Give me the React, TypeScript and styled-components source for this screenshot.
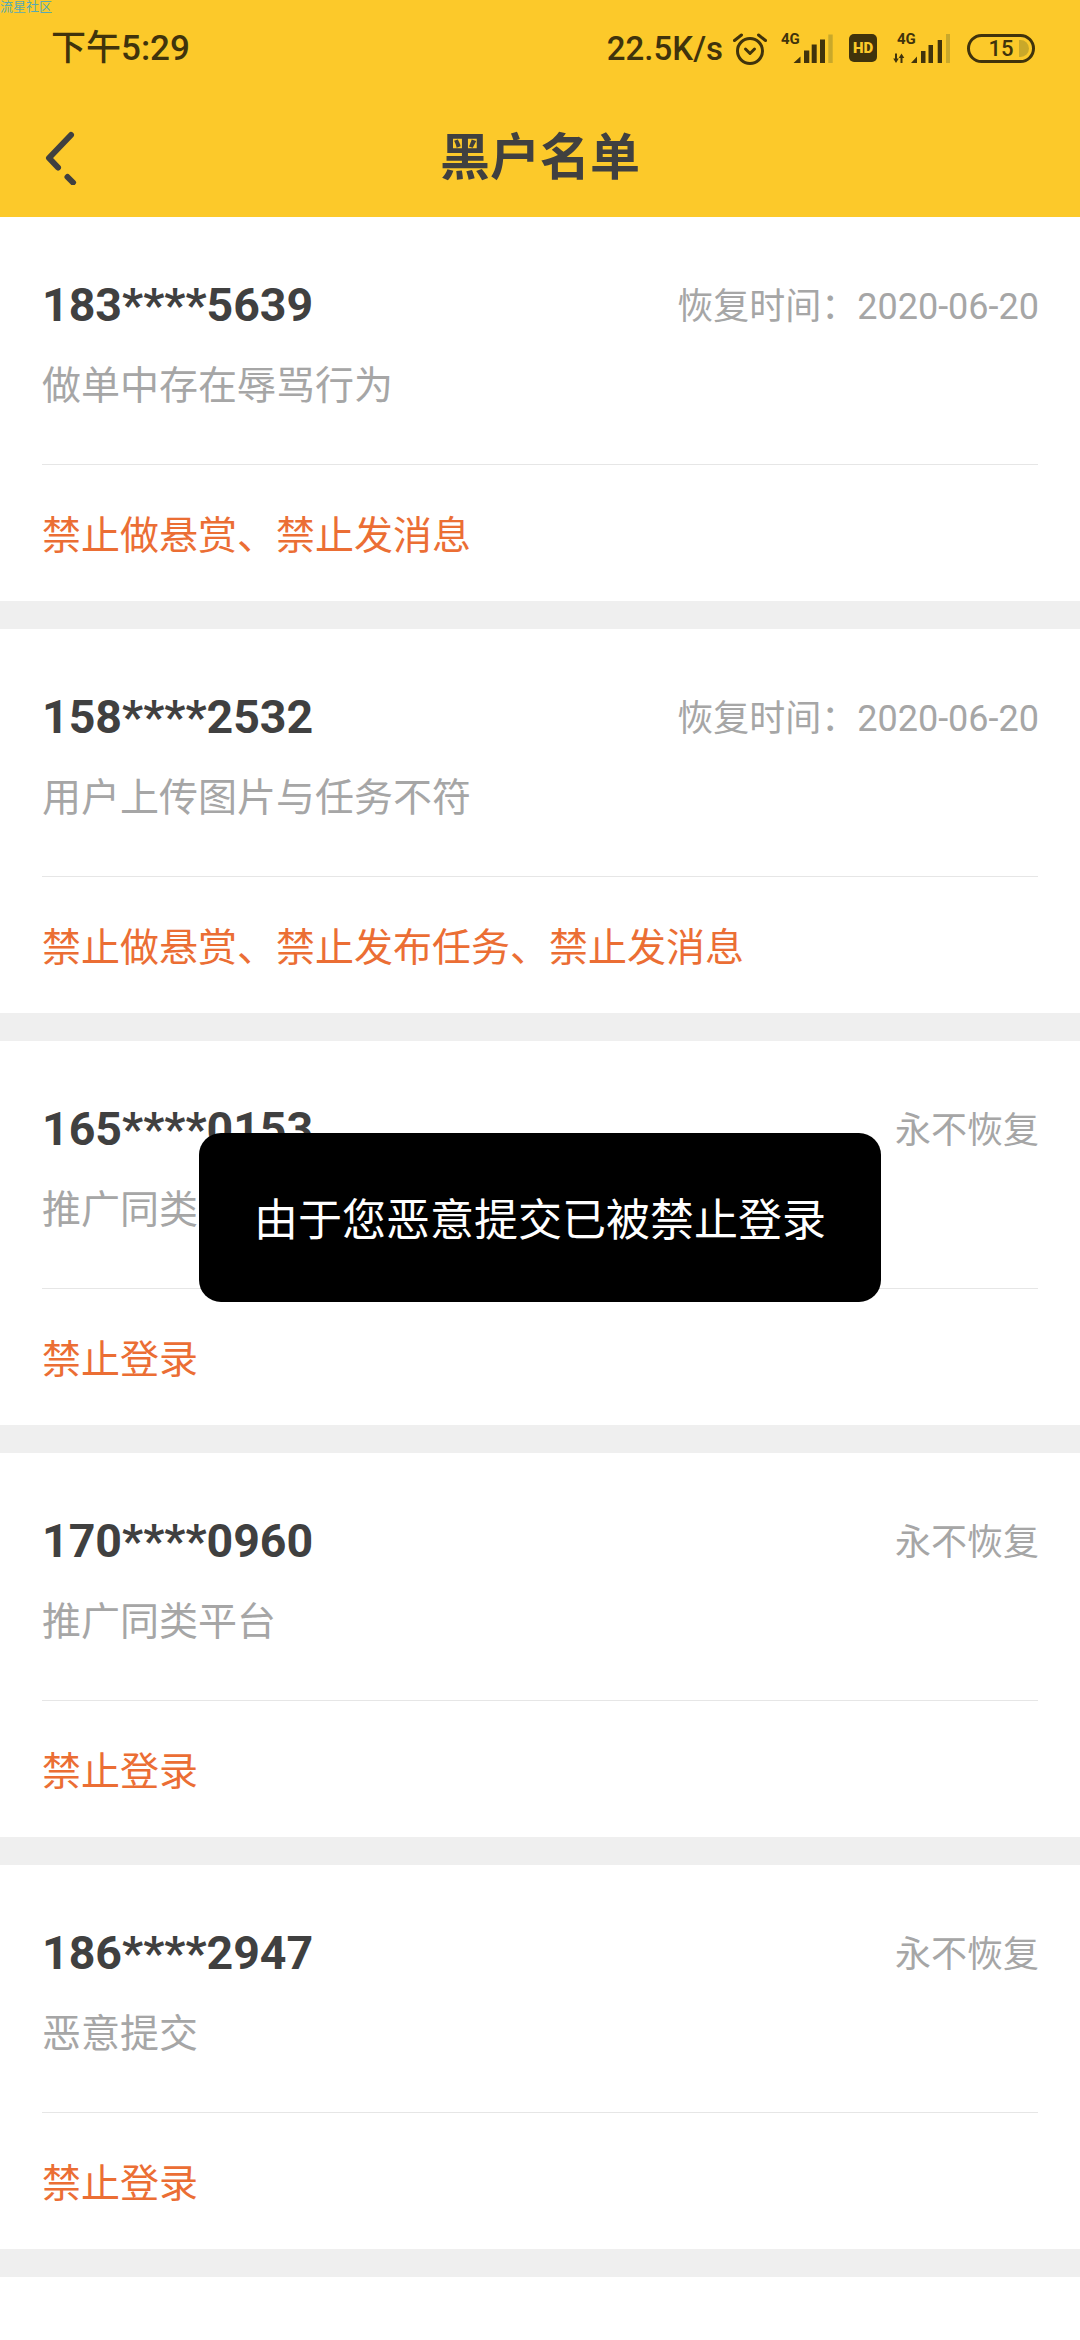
import React from "react";
import styled, { createGlobalStyle } from "styled-components";

const GlobalStyle = createGlobalStyle`
  html, body {
    margin: 0;
    padding: 0;
    background: #fff;
  }

  body {
    font-family: Roboto, "Noto Sans CJK SC", sans-serif;
  }
`;

const Page = styled.div`
  position: relative;
  width: 1080px;
  height: 2340px;
  overflow: hidden;
  background: #fff;
`;

const Watermark = styled.div`
  position: absolute;
  top: 0;
  left: 0;
  font-size: 13px;
  line-height: 13px;
  color: #58a9b4;
`;

const Header = styled.header`
  height: 217px;
  background: #fcc92a;
`;

const StatusBar = styled.div`
  height: 96px;
  box-sizing: border-box;
  padding: 0 45px 0 51px;
  display: flex;
  align-items: center;
  justify-content: space-between;
  color: #40330c;
`;

const Time = styled.div`
  font-size: 35px;
  font-weight: 500;
  line-height: 1;
`;

const StatusIcons = styled.div`
  display: flex;
  align-items: center;
  gap: 16px;
`;

const Speed = styled.div`
  font-size: 33px;
  font-weight: 500;
  line-height: 1;
  margin-right: -6px;
`;

const AlarmSvg = styled.svg`
  margin-right: -2px;
`;

const SignalSvg = styled.svg`
  margin-bottom: 4px;
`;

const HdBadge = styled.div`
  width: 28px;
  height: 28px;
  border-radius: 5px;
  background: #40330c;
  color: #fcc92a;
  font-size: 15px;
  font-weight: 900;
  line-height: 28px;
  text-align: center;
`;

const Battery = styled.div`
  position: relative;
  width: 68px;
  height: 29px;
  box-sizing: border-box;
  border: 3px solid #40330c;
  border-radius: 15px;
  font-size: 22px;
  font-weight: 500;
  line-height: 23px;
  text-align: center;

  &::after {
    content: "";
    position: absolute;
    top: 3px;
    right: 3px;
    bottom: 3px;
    width: 10px;
    border-radius: 0 9px 9px 0;
    background: #c9a82a;
  }
`;

const NavBar = styled.div`
  position: relative;
  height: 121px;
  box-sizing: border-box;
  padding-bottom: 8px;
  display: flex;
  align-items: center;
  justify-content: center;
`;

const BackIcon = styled.svg`
  position: absolute;
  left: 40px;
  top: 27px;
`;

const Title = styled.h1`
  margin: 0;
  font-size: 50px;
  font-weight: 700;
  color: #404040;
`;

const Card = styled.section`
  height: 384px;
  padding: 0 42px;
  background: #fff;
  border-bottom: 28px solid #efefef;
`;

const Info = styled.div`
  height: 248px;
  box-sizing: border-box;
  padding-top: 60px;
  border-bottom: 1px solid #e6e6e6;
`;

const TopRow = styled.div`
  display: flex;
  align-items: center;
  justify-content: space-between;
  height: 56px;
`;

const Phone = styled.div`
  font-size: 46.5px;
  font-weight: 700;
  color: #404040;
`;

const Recover = styled.div`
  margin: 0 -1px 5px 0;
  font-size: 36px;
  color: #a6a6a6;
`;

const Reason = styled.div`
  margin-top: 25px;
  font-size: 39px;
  line-height: 56px;
  color: #a6a6a6;
`;

const Action = styled.div`
  height: 135px;
  box-sizing: border-box;
  padding-bottom: 2px;
  display: flex;
  align-items: center;
  font-size: 39px;
  color: #eb6e34;
`;

const Toast = styled.div`
  position: absolute;
  top: 1133px;
  left: 199px;
  width: 682px;
  height: 169px;
  box-sizing: border-box;
  padding-bottom: 2px;
  display: flex;
  align-items: center;
  justify-content: center;
  border-radius: 22px;
  background: #000;
  color: #fff;
  font-size: 44px;
`;

const records = [
  { phone: "183****5639", recover: "恢复时间\uFF1A2020-06-20", reason: "做单中存在辱骂行为", action: "禁止做悬赏、禁止发消息" },
  { phone: "158****2532", recover: "恢复时间\uFF1A2020-06-20", reason: "用户上传图片与任务不符", action: "禁止做悬赏、禁止发布任务、禁止发消息" },
  { phone: "165****0153", recover: "永不恢复", reason: "推广同类平台", action: "禁止登录" },
  { phone: "170****0960", recover: "永不恢复", reason: "推广同类平台", action: "禁止登录" },
  { phone: "186****2947", recover: "永不恢复", reason: "恶意提交", action: "禁止登录" },
];

const DARK = "#40330c";
const DIM = "#c9a82a";

const AlarmIcon = () => (
  <AlarmSvg width="34" height="33" viewBox="0 0 34 33" fill="none" stroke={DARK} strokeWidth="3" strokeLinecap="round" strokeLinejoin="round">
    <circle cx="17" cy="19" r="12.5" />
    <path d="M12.5 17l4.5 4.5 4.5-4.5" />
    <path d="M1.5 8.5L8.5 3M25.5 3l7 5.5" />
  </AlarmSvg>
);

const SignalIcon = ({ arrows }: { arrows?: boolean }) => (
  <SignalSvg width={arrows ? 58 : 52} height="34" viewBox={arrows ? "0 -4 58 34" : "0 -4 52 34"} fill={DARK}>
    {arrows ? (
      <>
        <text x="4" y="11" fontSize="15" fontWeight="700" fontFamily="Roboto, sans-serif">4G</text>
        <path d="M2 20.500h2v5h1.800L3 30 .2 25.500H2zM9.500 30h-2v-5H5.700l2.800-4.500 2.800 4.500H9.500z" />
        <path d="M18 30l6-6.500V30zM28 18h4.500v12H28zM35.500 12h4.500v18h-4.500zM44.700 7H49v23h-4.300z" />
        <path fill={DIM} d="M53 1h4v29h-4z" />
      </>
    ) : (
      <>
        <text x="0" y="11" fontSize="15" fontWeight="700" fontFamily="Roboto, sans-serif">4G</text>
        <path d="M12.500 30l7-6.500V30zM23 17.500h5.300V30H23zM30.700 11.500h5V30h-5zM39 6.500h5V30h-5z" />
        <path fill={DIM} d="M47.300 1.500h4.400V30h-4.400z" />
      </>
    )}
  </SignalSvg>
);

const App = () => (
  <Page lang="zh-CN">
    <GlobalStyle />
    <Header>
      <StatusBar>
        <Time>下午5:29</Time>
        <StatusIcons>
          <Speed>22.5K/s</Speed>
          <AlarmIcon />
          <SignalIcon />
          <HdBadge>HD</HdBadge>
          <SignalIcon arrows />
          <Battery>15</Battery>
        </StatusIcons>
      </StatusBar>
      <NavBar>
        <BackIcon width="40" height="62" viewBox="0 0 40 62" fill="none" stroke="#404040" strokeWidth="6" strokeLinecap="round" strokeLinejoin="round">
          <path d="M31 12L9 35l9 9.500" />
          <path d="M27.500 54l5.500 5.500" />
        </BackIcon>
        <Title>黑户名单</Title>
      </NavBar>
    </Header>
    {records.map((record) => (
      <Card key={record.phone}>
        <Info>
          <TopRow>
            <Phone>{record.phone}</Phone>
            <Recover>{record.recover}</Recover>
          </TopRow>
          <Reason>{record.reason}</Reason>
        </Info>
        <Action>{record.action}</Action>
      </Card>
    ))}
    <Watermark>流星社区</Watermark>
    <Toast>由于您恶意提交已被禁止登录</Toast>
  </Page>
);

export default App;
